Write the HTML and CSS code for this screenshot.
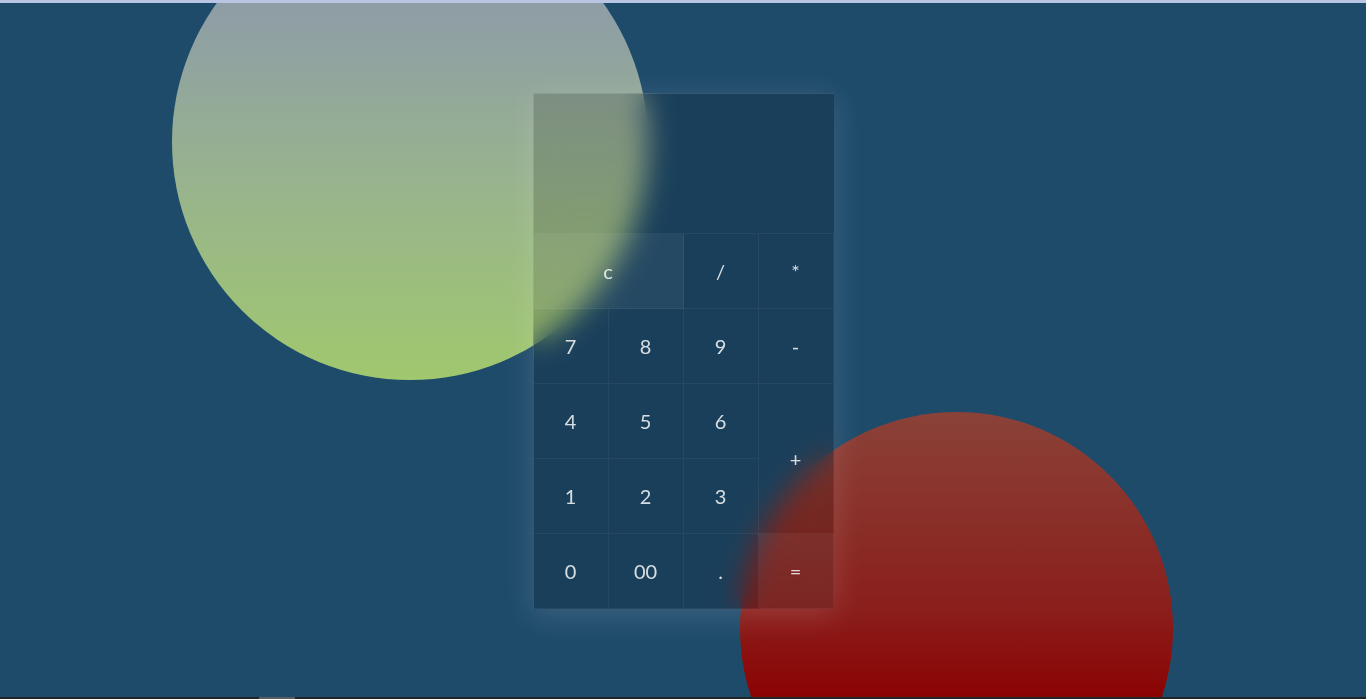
FILE: index.html
```html
<!DOCTYPE html>
<html lang="en">
<head>
<meta charset="utf-8">
<title>Calculator</title>
<link rel="stylesheet" href="styles.css">
</head>
<body>
<div class="topstrip"></div>
<main class="stage">
  <div class="blob blob-green"></div>
  <div class="blob blob-red"></div>
  <form class="calc">
    <input class="display" type="text" readonly>
    <div class="keys">
      <span class="key key-wide key-light">c</span>
      <span class="key">/</span>
      <span class="key">*</span>
      <span class="key">7</span>
      <span class="key">8</span>
      <span class="key">9</span>
      <span class="key">-</span>
      <span class="key">4</span>
      <span class="key">5</span>
      <span class="key">6</span>
      <span class="key key-tall">+</span>
      <span class="key">1</span>
      <span class="key">2</span>
      <span class="key">3</span>
      <span class="key">0</span>
      <span class="key">00</span>
      <span class="key">.</span>
      <span class="key key-light">=</span>
    </div>
  </form>
</main>
<div class="bottomstrip"><span class="thumb"></span></div>
</body>
</html>
```
FILE: styles.css
```css
html, body {
  margin: 0;
  padding: 0;
  height: 100%;
}
body {
  display: flex;
  flex-direction: column;
  background: #1f4b6b;
  font-family: "Lato", "Noto Sans", sans-serif;
  overflow: hidden;
}
.topstrip {
  height: 3px;
  background: #bac5e3;
  flex: none;
}
.bottomstrip {
  height: 2px;
  background: #222426;
  flex: none;
  position: relative;
}
.thumb {
  position: absolute;
  left: 259px;
  top: 0;
  width: 36px;
  height: 2px;
  background: #5a5c60;
}
.stage {
  flex: 1;
  position: relative;
  overflow: hidden;
  display: flex;
  align-items: flex-start;
  justify-content: center;
  padding-top: 90px;
}
.blob {
  position: absolute;
  border-radius: 50%;
}
.blob-green {
  left: 172px;
  top: -99px;
  width: 476px;
  height: 476px;
  background: linear-gradient(to bottom, #8b97ab 0%, #8f9fa4 25%, #98b48c 60%, #a0c86e 100%);
}
.blob-red {
  left: 740px;
  top: 409px;
  width: 433px;
  height: 433px;
  background: linear-gradient(to bottom, #8a4238 0%, #8a1f1c 45%, #8b0000 68%, #8b0000 100%);
}
.calc {
  position: relative;
  width: 301px;
  height: 516px;
  margin: 0;
  display: flex;
  flex-direction: column;
  background: rgba(0, 0, 0, 0.15);
  backdrop-filter: blur(14px);
  border-top: 1px solid rgba(255, 255, 255, 0.12);
  border-left: 1px solid rgba(255, 255, 255, 0.12);
  box-sizing: border-box;
  box-shadow: 0 6px 30px rgba(255, 255, 255, 0.14);
}
.display {
  height: 140px;
  flex: none;
  border: none;
  outline: none;
  background: transparent;
  padding: 0 16px;
  font: inherit;
  color: #fff;
  border-bottom: 1px solid rgba(255, 255, 255, 0.05);
  box-sizing: border-box;
}
.keys {
  display: grid;
  grid-template-columns: repeat(4, 75px);
  grid-auto-rows: 75px;
}
.key {
  display: flex;
  align-items: center;
  justify-content: center;
  color: rgba(255, 255, 255, 0.82);
  font-size: 20px;
  border-right: 1px solid rgba(255, 255, 255, 0.05);
  border-bottom: 1px solid rgba(255, 255, 255, 0.05);
  box-sizing: border-box;
  user-select: none;
}
.key-wide {
  grid-column: span 2;
}
.key-tall {
  grid-row: span 2;
}
.key-light {
  background: rgba(255, 255, 255, 0.05);
}
```
